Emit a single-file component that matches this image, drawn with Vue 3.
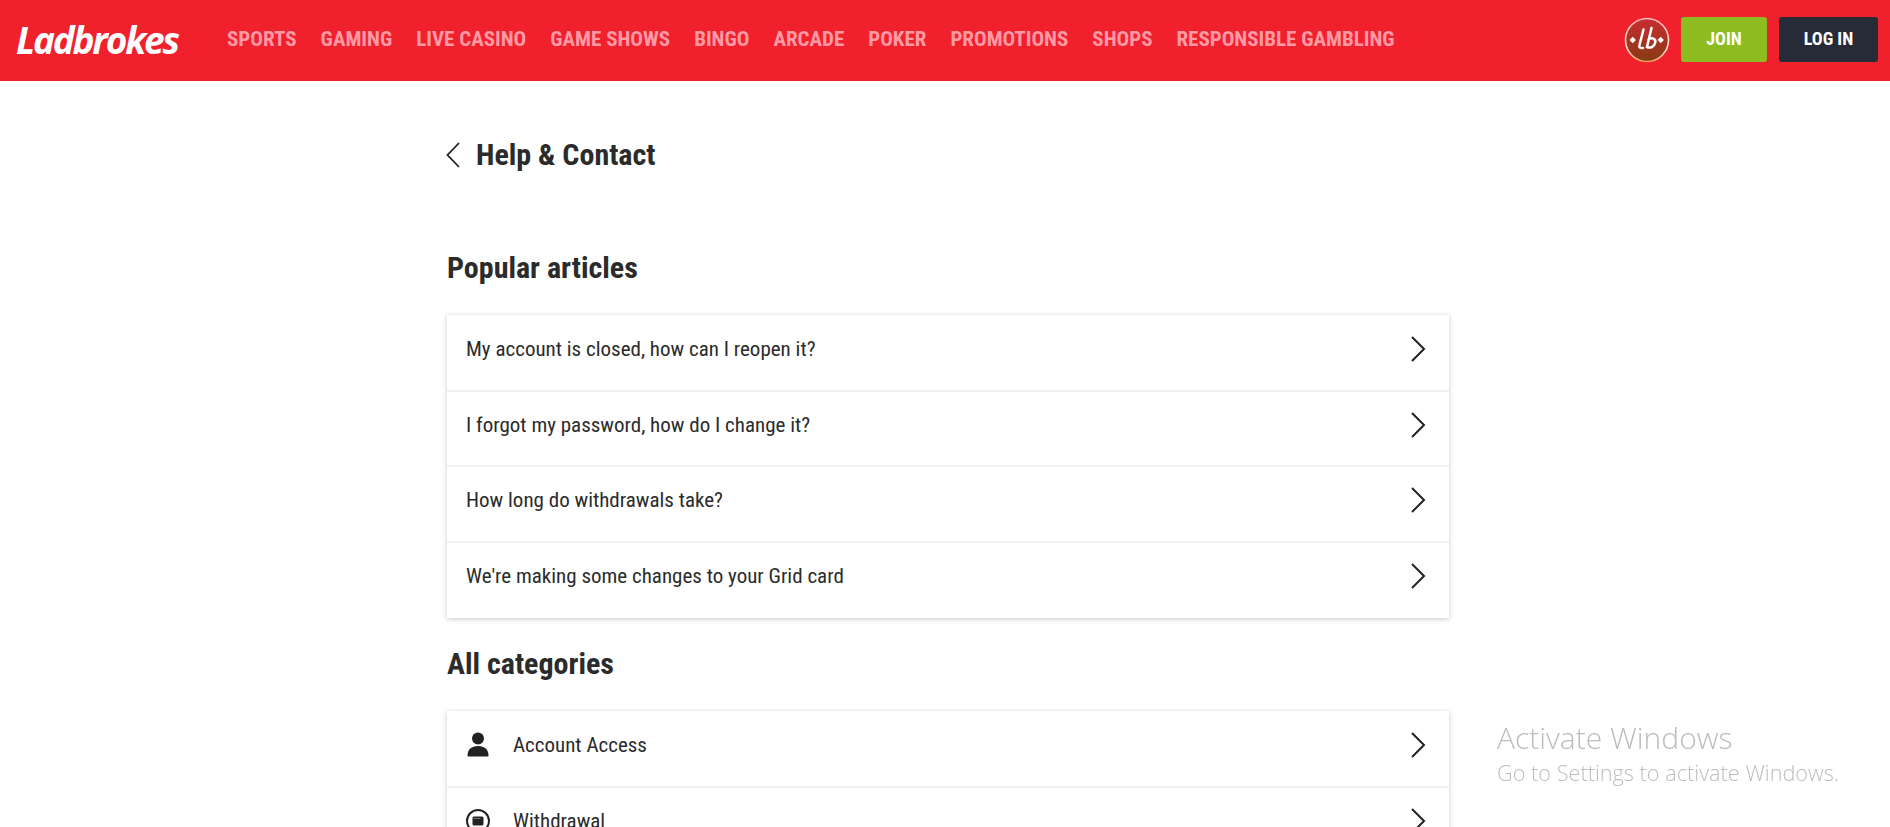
<template>
  <div class="page">
    <header class="top-bar">
      <a class="logo">Ladbrokes</a>
      <nav class="main-nav">
        <a v-for="item in navItems" :key="item">{{ item }}</a>
      </nav>
      <div class="top-actions">
        <span class="lb-badge">
          <svg width="46" height="46" viewBox="0 0 46 46">
            <defs>
              <linearGradient id="lbGrad" x1="0" y1="0" x2="0" y2="1">
                <stop offset="0" stop-color="#c92d31" />
                <stop offset="1" stop-color="#873a14" />
              </linearGradient>
              <linearGradient id="lbRim" x1="0" y1="0" x2="0" y2="1">
                <stop offset="0" stop-color="#fbb9b4" />
                <stop offset="0.7" stop-color="#fbe0d6" />
                <stop offset="1" stop-color="#f0a860" />
              </linearGradient>
            </defs>
            <circle cx="23" cy="23" r="21.5" fill="url(#lbGrad)" stroke="url(#lbRim)" stroke-width="1.6" />
            <path d="M5.500 23l3.200-3.200 3.200 3.200-3.200 3.200zM33.500 23l3.200-3.200 3.200 3.200-3.200 3.200z" fill="#fff" />
            <path d="M19.500 12.500l-4 15.500c-.6 2.500.5 3.500 3.500 3M27.500 11l-4.500 19c3.500 1.500 7.500-.5 8.300-4.500.7-3.500-3-5.500-6.800-3" fill="none" stroke="#fff" stroke-width="2.500" stroke-linecap="round" />
          </svg>
        </span>
        <button class="btn btn-join">JOIN</button>
        <button class="btn btn-login">LOG IN</button>
      </div>
    </header>

    <main class="content">
      <div class="back-row">
        <svg class="back-icon" width="15" height="26" viewBox="0 0 15 26">
          <polyline points="13,1 1.5,13 13,25" fill="none" stroke="#222" stroke-width="1.8" />
        </svg>
        <h1>Help &amp; Contact</h1>
      </div>

      <h2 class="popular-title">Popular articles</h2>
      <ul class="card">
        <li v-for="article in articles" :key="article" class="card-row">
          <span class="row-label">{{ article }}</span>
          <svg class="chevron" width="15" height="26" viewBox="0 0 15 26">
            <polyline points="1,1 13,13 1,25" fill="none" stroke="#222" stroke-width="2" />
          </svg>
        </li>
      </ul>

      <h2 class="categories-title">All categories</h2>
      <ul class="card">
        <li class="card-row">
          <svg class="row-icon" width="24" height="26" viewBox="0 0 24 26">
            <circle cx="12" cy="6.500" r="6" fill="#222" />
            <path d="M1.500 23.500c0-6 4-9.500 10.500-9.500s10.500 3.500 10.500 9.500c0 .6-.4 1-1 1h-19c-.6 0-1-.4-1-1z" fill="#222" />
          </svg>
          <span class="row-label">Account Access</span>
          <svg class="chevron" width="15" height="26" viewBox="0 0 15 26">
            <polyline points="1,1 13,13 1,25" fill="none" stroke="#222" stroke-width="2" />
          </svg>
        </li>
        <li class="card-row">
          <svg class="row-icon" width="24" height="26" viewBox="0 0 24 26">
            <circle cx="12" cy="13" r="11" fill="none" stroke="#222" stroke-width="2" />
            <rect x="6.500" y="8.500" width="11" height="9" rx="1.500" fill="#222" />
            <rect x="7.500" y="10" width="7" height="1" fill="#777" />
          </svg>
          <span class="row-label">Withdrawal</span>
          <svg class="chevron" width="15" height="26" viewBox="0 0 15 26">
            <polyline points="1,1 13,13 1,25" fill="none" stroke="#222" stroke-width="2" />
          </svg>
        </li>
      </ul>
    </main>

    <div class="activate-note">
      <div class="activate-title">Activate Windows</div>
      <div class="activate-sub">Go to Settings to activate Windows.</div>
    </div>
  </div>
</template>

<script setup>
const navItems = [
  'SPORTS',
  'GAMING',
  'LIVE CASINO',
  'GAME SHOWS',
  'BINGO',
  'ARCADE',
  'POKER',
  'PROMOTIONS',
  'SHOPS',
  'RESPONSIBLE GAMBLING'
];

const articles = [
  'My account is closed, how can I reopen it?',
  'I forgot my password, how do I change it?',
  'How long do withdrawals take?',
  "We're making some changes to your Grid card"
];
</script>

<style>
html,
body {
  margin: 0;
  height: 100%;
  overflow: hidden;
  background: #fff;
}
</style>

<style scoped>
.page {
  height: 827px;
  overflow: hidden;
  font-family: Roboto, "Liberation Sans", sans-serif;
  font-stretch: 75%;
  color: #2b2b2b;
}

.top-bar {
  display: flex;
  align-items: center;
  height: 79px;
  padding: 0 12px 2px 16px;
  background: #f1202d;
}

.logo {
  width: 211px;
  font-family: "Open Sans", sans-serif;
  font-stretch: normal;
  font-style: italic;
  font-weight: 700;
  font-size: 37px;
  letter-spacing: -2.2px;
  color: #fff;
}

.main-nav {
  display: flex;
  gap: 24px;
  margin-top: -1px;
  font-size: 21px;
  font-weight: 700;
  color: #ff9aa5;
}

.top-actions {
  display: flex;
  align-items: center;
  margin-left: auto;
}

.lb-badge {
  display: flex;
  margin-right: 11px;
}

.btn {
  height: 45px;
  padding: 0 0 2px;
  border: none;
  border-radius: 3px;
  font-family: inherit;
  font-stretch: 75%;
  font-size: 18px;
  font-weight: 700;
  color: #fff;
}

.btn-join {
  width: 86px;
  margin-right: 12px;
  background: #8cbc1f;
}

.btn-login {
  width: 99px;
  background: #272b38;
}

.content {
  width: 1002px;
  margin-left: 447px;
}

.back-row {
  display: flex;
  align-items: center;
  gap: 15px;
  height: 42px;
  margin-top: 53px;
}

.back-icon {
  margin-left: -1px;
}

h1,
h2 {
  margin: 0;
  font-size: 30px;
  font-weight: 700;
  line-height: 40px;
}

.popular-title {
  margin-top: 72px;
}

.categories-title {
  margin-top: 26px;
}

.card {
  margin: 27px 0 0;
  padding: 1.5px 0 0;
  list-style: none;
  background: #fff;
  box-shadow: 0 1px 5px rgba(0, 0, 0, 0.22);
}

.card-row {
  display: flex;
  align-items: center;
  height: 75.4px;
  padding: 0 23px 8px 19px;
  border-bottom: 2px solid #f0f0f4;
  box-sizing: border-box;
}

.card-row:last-child {
  height: 75px;
  border-bottom: none;
}

.row-icon {
  margin-right: 23px;
}

.row-label {
  font-size: 21px;
}

.chevron {
  margin-left: auto;
}

.activate-note {
  position: fixed;
  left: 1497px;
  top: 718px;
  font-family: "Open Sans", sans-serif;
  font-stretch: normal;
  font-weight: 300;
  color: #bdbdbd;
}

.activate-title {
  font-size: 30px;
  line-height: 40px;
}

.activate-sub {
  font-size: 21.7px;
}
</style>
